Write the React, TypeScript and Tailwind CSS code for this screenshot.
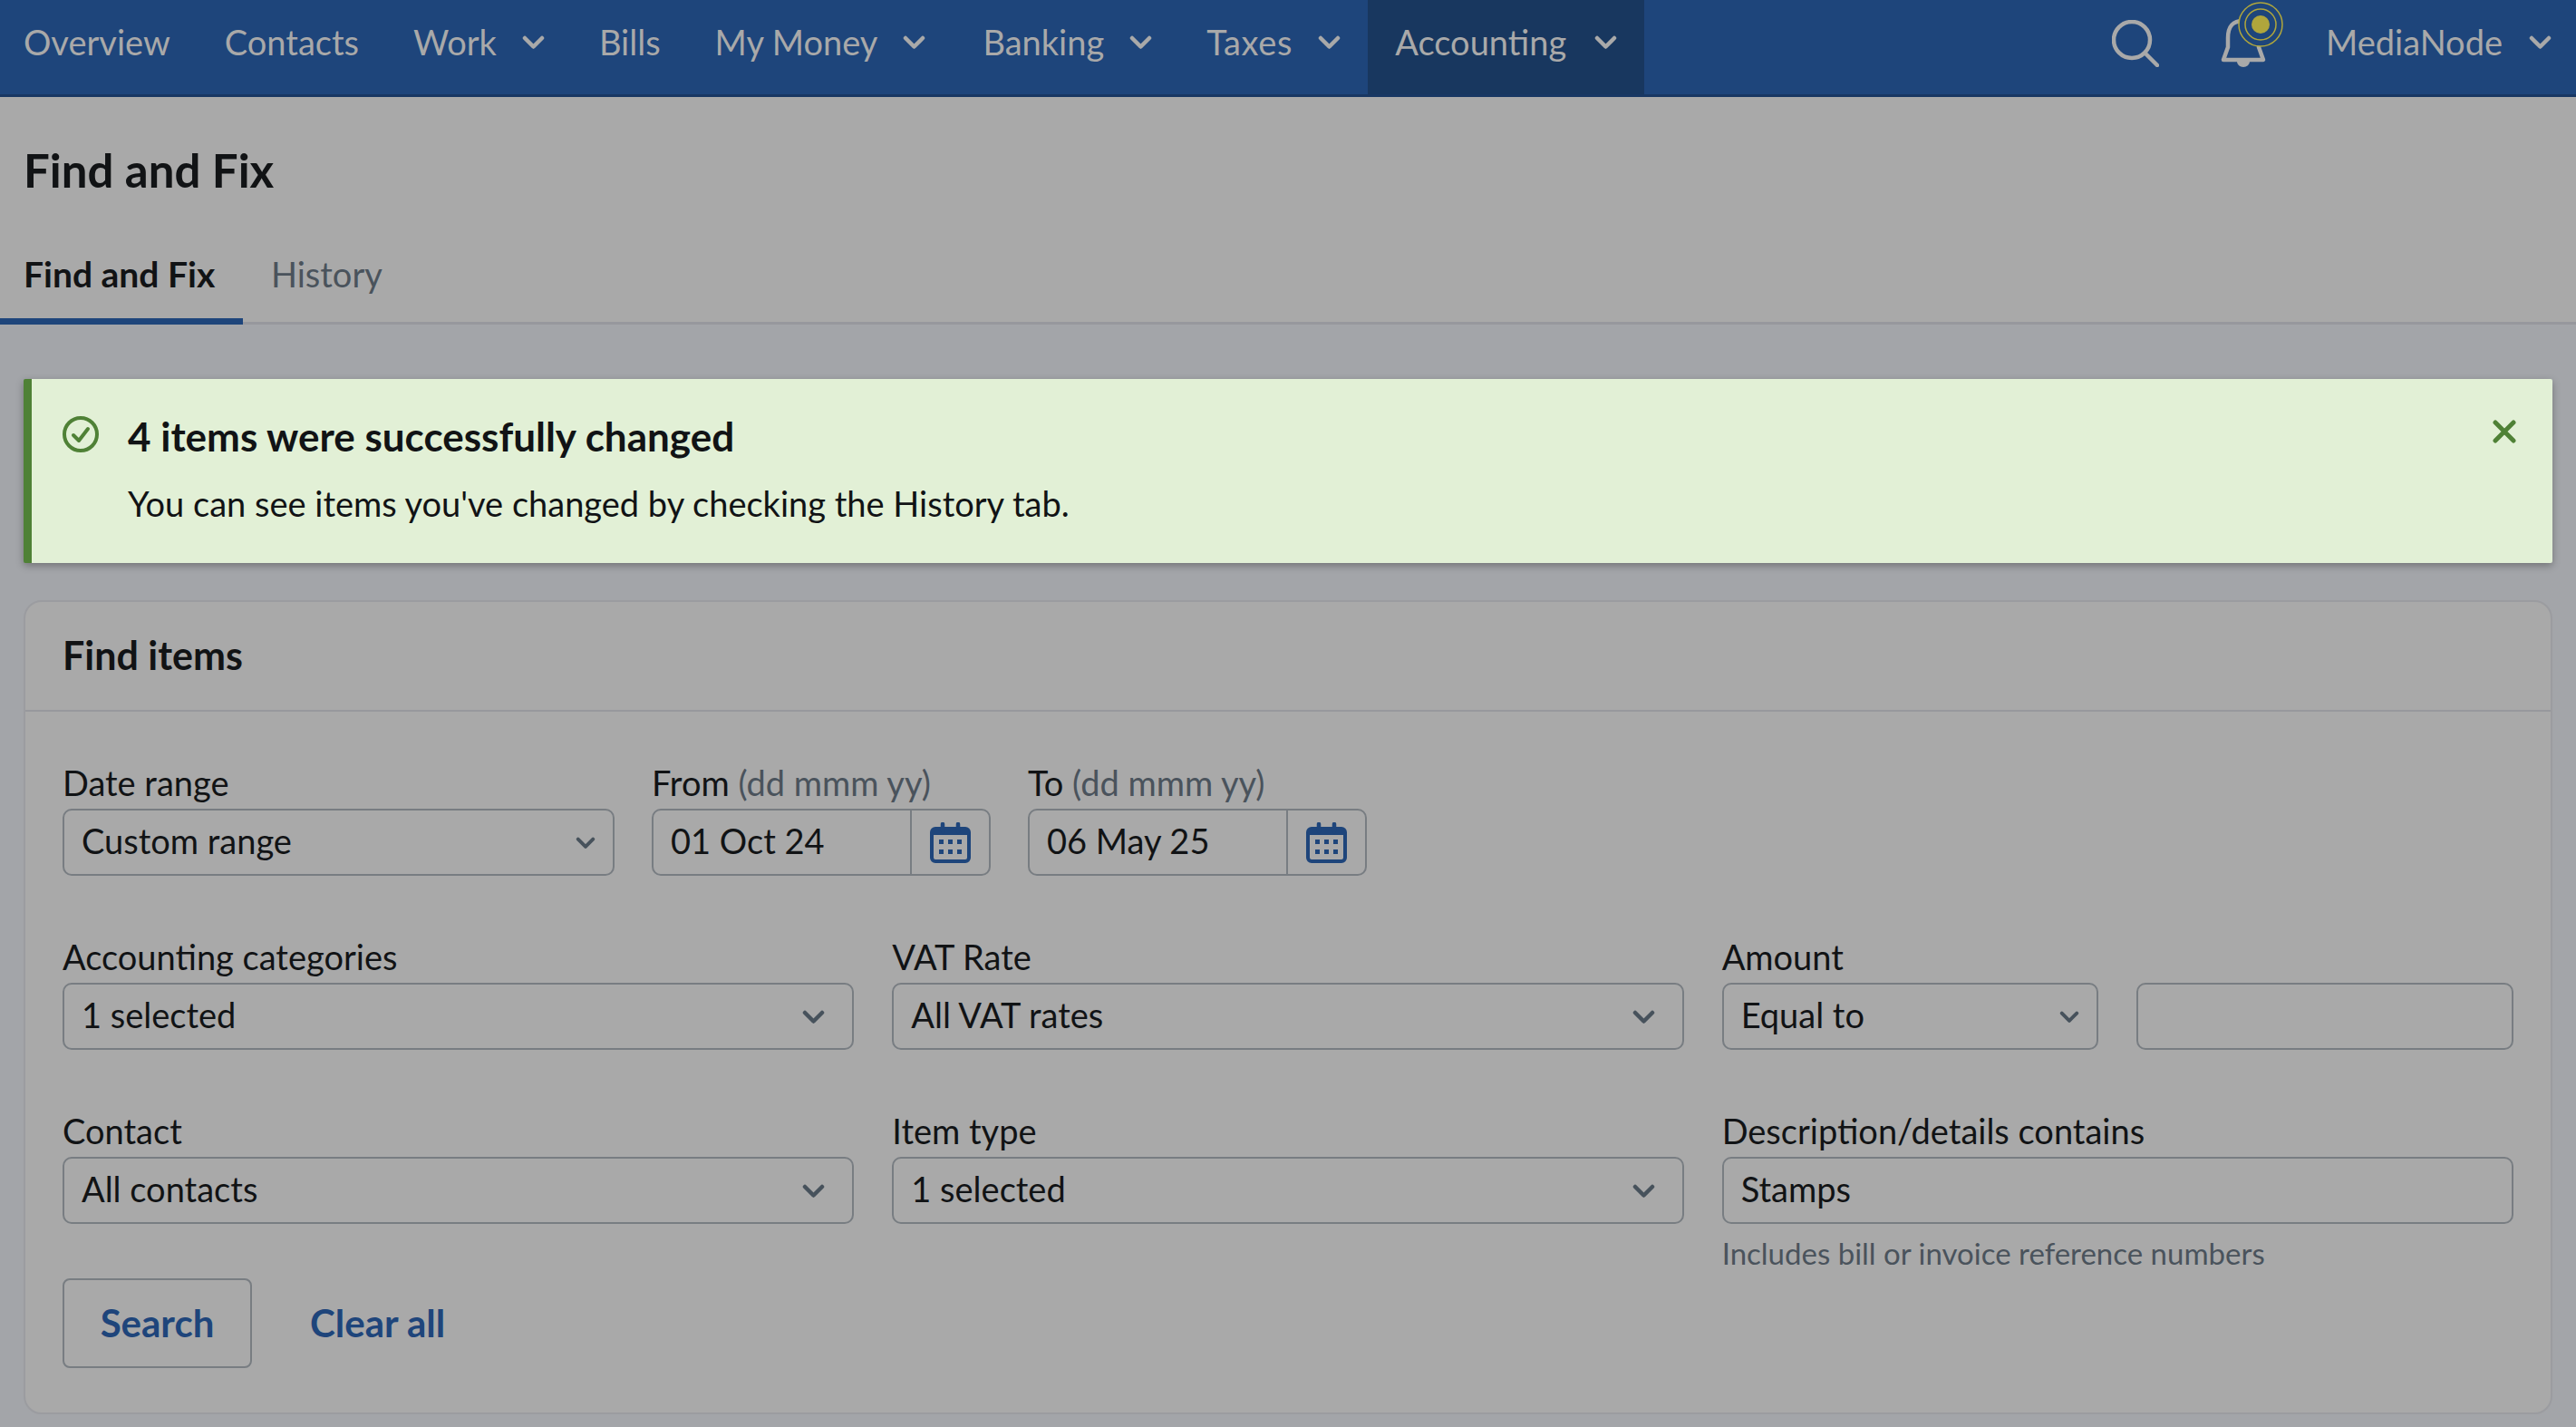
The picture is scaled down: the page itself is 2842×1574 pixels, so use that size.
import type { ReactNode } from "react";

const Chevron = ({ className }: { className: string }) => (
  <svg viewBox="0 0 25 15" fill="none" stroke="currentColor" strokeWidth="4.5" strokeLinecap="round" strokeLinejoin="round" className={className}>
    <path d="M3 3l9.500 9.500L22 3" />
  </svg>
);

const NavItem = ({ label, menu, className = "" }: { label: ReactNode; menu?: boolean; className?: string }) => (
  <div className={`flex h-full items-center px-[30px] pb-[11px] ${className}`}>
    <span>{label}</span>
    {menu && <Chevron className="ml-[28px] h-[15px] w-[25px]" />}
  </div>
);

const Field = ({ label, children }: { label: ReactNode; children: ReactNode }) => (
  <div className="flex flex-col">
    <label className="mb-[4px] h-[50px] text-[38px] leading-[50px] text-[#111315]">{label}</label>
    {children}
  </div>
);

const Box = ({ children, small }: { children?: ReactNode; small?: boolean }) => (
  <div className={`flex h-[74px] items-center justify-between rounded-[10px] border-2 border-[#787d82] pl-[19px] text-[38px] text-[#111315] ${small ? "pr-[19px]" : "pr-[30px]"}`}>
    {children}
  </div>
);

const Select = ({ value, small }: { value: string; small?: boolean }) => (
  <Box small={small}>
    <span className="pb-[3px]">{value}</span>
    <Chevron className={`text-[#47525c] ${small ? "h-[13px] w-[22px]" : "h-[15px] w-[25px]"}`} />
  </Box>
);

const CalendarIcon = () => (
  <svg viewBox="0 0 45 45" fill="none" className="h-[45px] w-[45px]">
    <rect x="2" y="7" width="41" height="36" rx="4" stroke="#1e457b" strokeWidth="4" />
    <rect x="2" y="7" width="41" height="7" fill="#1e457b" />
    <path d="M14 2v8M31 2v8" stroke="#1e457b" strokeWidth="4.500" strokeLinecap="round" />
    <g fill="#1e457b">
      <rect x="10" y="19" width="5" height="5" />
      <rect x="20" y="19" width="5" height="5" />
      <rect x="30" y="19" width="5" height="5" />
      <rect x="10" y="30" width="5" height="5" />
      <rect x="20" y="30" width="5" height="5" />
      <rect x="30" y="30" width="5" height="5" />
    </g>
  </svg>
);

const DateField = ({ label, value }: { label: string; value: string }) => (
  <div className="w-[374px]">
    <Field
      label={
        <>
          {label} <span className="text-[#4a535c]">(dd mmm yy)</span>
        </>
      }
    >
      <div className="flex h-[74px] rounded-[10px] border-2 border-[#787d82] text-[38px] text-[#111315]">
        <div className="flex flex-1 items-center border-r-2 border-[#787d82] pb-[3px] pl-[19px]">{value}</div>
        <div className="flex w-[85px] items-center justify-center">
          <CalendarIcon />
        </div>
      </div>
    </Field>
  </div>
);

export default function App() {
  return (
    <div className="h-[1574px] w-full overflow-hidden bg-[#a3a5a9] font-['Lato',sans-serif]">
      <nav className="flex h-[107px] items-stretch justify-between border-b-[3px] border-[#183763] bg-[#1e457b] text-[38px] text-[#a9a9a9]">
        <div className="-ml-[4px] flex h-full">
          <NavItem label="Overview" />
          <NavItem label="Contacts" />
          <NavItem label="Work" menu />
          <NavItem label="Bills" />
          <NavItem label="My Money" menu />
          <NavItem label="Banking" menu className="ml-[3px]" />
          <NavItem label={<span className="tracking-[0.7px]">Taxes</span>} menu />
          <div className="flex h-full items-center bg-[#18375f] px-[30px] pb-[11px]">
            <span>Accounting</span>
            <Chevron className="ml-[31px] h-[15px] w-[25px]" />
          </div>
        </div>
        <div className="flex h-full items-center pb-[11px] pr-[27px]">
          <svg viewBox="0 0 52 52" fill="none" stroke="#a9a9a9" strokeWidth="4.500" strokeLinecap="round" className="mt-[2px] h-[52px] w-[52px]">
            <circle cx="22" cy="22" r="20" />
            <path d="M37 37l13 13" />
          </svg>
          <svg viewBox="0 0 70 74" fill="none" className="ml-[68px] mt-[-16px] h-[74px] w-[70px]">
            <path d="M3 64l5-14V40C8 26 14 21 25 21s17 5 17 19v10l5 14z" stroke="#a9a9a9" strokeWidth="4.500" strokeLinejoin="round" />
            <path d="M18 66a7 6 0 0 0 14 0z" fill="#a9a9a9" />
            <circle cx="44" cy="25" r="24" fill="#1e457b" stroke="#b0a63c" strokeWidth="1.500" />
            <circle cx="44" cy="25" r="17" stroke="#b0a63c" strokeWidth="1.500" />
            <circle cx="44" cy="25" r="10" fill="#b0a63c" />
          </svg>
          <span className="ml-[46px]">MediaNode</span>
          <Chevron className="ml-[29px] h-[15px] w-[25px]" />
        </div>
      </nav>

      <header className="border-b-[3px] border-[#97989d] bg-[#a9a9a9] pl-[26px]">
        <h1 className="pt-[50px] text-[51px] font-bold leading-[62px] text-[#111315]">Find and Fix</h1>
        <div className="mt-[58px] flex leading-[50px]">
          <div className="-mb-[3px] -ml-[26px] w-[268px] border-b-[7px] border-[#1e457b] pb-[24px] pl-[26px] text-[39px] font-bold text-[#111315]">Find and Fix</div>
          <div className="ml-[31px] text-[38px] text-[#4a535c]">History</div>
        </div>
      </header>

      <main className="px-[26px] pt-[60px]">
        <div className="flex h-[203px] rounded-[2px] border-l-[9px] border-[#4f8136] bg-[#e2f0d6] pl-[34px] pr-[40px] pt-[41px] shadow-[0_3px_8px_rgba(0,0,0,0.3)]">
          <svg viewBox="0 0 40 40" fill="none" stroke="#4f8136" strokeLinecap="round" strokeLinejoin="round" className="h-[40px] w-[40px] shrink-0">
            <circle cx="20" cy="20" r="18" strokeWidth="4" />
            <path d="M12 21l6 6 10-13" strokeWidth="4" />
          </svg>
          <div className="ml-[32px] flex-1">
            <div className="text-[44px] font-bold leading-[44px] text-[#111315]">4 items were successfully changed</div>
            <div className="mt-[30px] text-[38px] leading-[44px] text-[#111315]">You can see items you've changed by checking the History tab.</div>
          </div>
          <svg viewBox="0 0 26 26" fill="none" stroke="#4f8136" strokeWidth="5" strokeLinecap="round" className="mt-[4px] h-[26px] w-[26px]">
            <path d="M3 3l20 20M23 3L3 23" />
          </svg>
        </div>

        <section className="mt-[41px] h-[898px] rounded-[20px] border-2 border-[#9b9ca0] bg-[#a9a9a9]">
          <div className="flex h-[121px] items-center border-b-2 border-[#97989d] pl-[41px]">
            <h2 className="text-[43px] font-bold text-[#111315]">Find items</h2>
          </div>

          <div className="px-[41px] pt-[53px]">
            <div className="flex gap-[41px]">
              <div className="w-[609px]">
                <Field label="Date range">
                  <Select value="Custom range" small />
                </Field>
              </div>
              <DateField label="From" value="01 Oct 24" />
              <DateField label="To" value="06 May 25" />
            </div>

            <div className="mt-[64px] grid grid-cols-3 gap-x-[42px] gap-y-[64px]">
              <Field label="Accounting categories">
                <Select value="1 selected" />
              </Field>
              <Field label="VAT Rate">
                <Select value="All VAT rates" />
              </Field>
              <Field label="Amount">
                <div className="grid grid-cols-2 gap-[42px]">
                  <Select value="Equal to" small />
                  <Box />
                </div>
              </Field>
              <Field label="Contact">
                <Select value="All contacts" />
              </Field>
              <Field label="Item type">
                <Select value="1 selected" />
              </Field>
              <div className="relative">
                <Field label="Description/details contains">
                  <Box>
                    <span className="pb-[3px]">Stamps</span>
                  </Box>
                </Field>
                <p className="absolute left-0 top-[140px] text-[33px] leading-[40px] text-[#4a535c]">Includes bill or invoice reference numbers</p>
              </div>
            </div>

            <div className="mt-[60px] flex items-center text-[42px] font-bold text-[#1e457b]">
              <button className="h-[99px] w-[209px] rounded-[8px] border-2 border-[#787d82]">Search</button>
              <button className="ml-[64px]">Clear all</button>
            </div>
          </div>
        </section>
      </main>
    </div>
  );
}
